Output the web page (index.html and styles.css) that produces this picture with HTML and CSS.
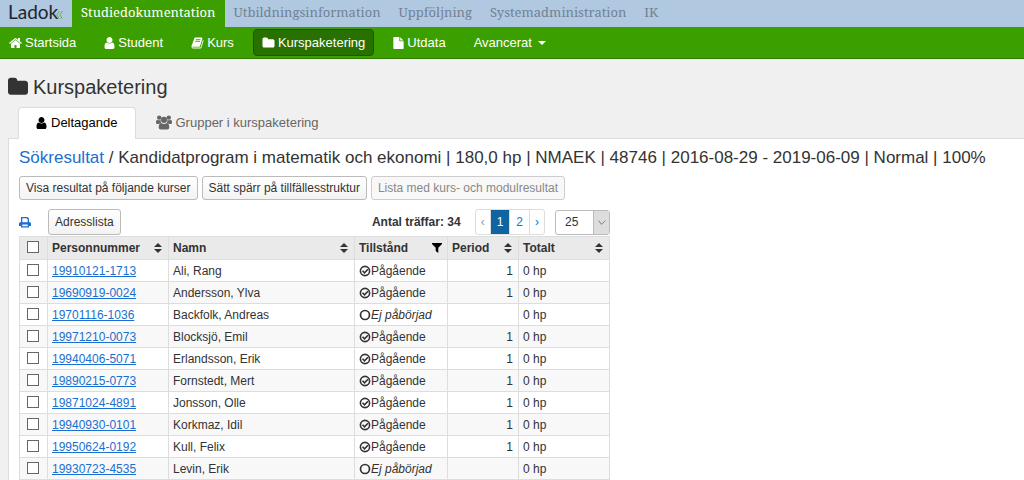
FILE: index.html
```html
<!DOCTYPE html>
<html lang="sv">
<head>
<meta charset="utf-8">
<title>Ladok – Kurspaketering</title>
<link rel="stylesheet" href="styles.css">
</head>
<body>
<svg class="sprite" aria-hidden="true">
  <symbol id="home" viewBox="64 128 1664 1536"><path d="M1472 992v480q0 26-19 45t-45 19h-384v-384h-256v384h-384q-26 0-45-19t-19-45v-480q0-1 .5-3t.5-3l575-474 575 474q1 2 1 6zm223-69l-62 74q-8 9-21 11h-3q-13 0-21-7l-692-577-692 577q-12 8-24 7-13-2-21-11l-62-74q-8-10-7-23.5t11-21.5l719-599q32-26 76-26t76 26l244 204v-195q0-14 9-23t23-9h192q14 0 23 9t9 23v408l219 182q10 8 11 21.5t-7 23.5z"/></symbol>
  <symbol id="user" viewBox="256 128 1280 1536"><path d="M1536 1399q0 109-62.5 187t-150.5 78h-854q-88 0-150.5-78t-62.5-187q0-85 8.5-160.5t31.5-152 58.5-131 94-89 134.5-34.5q131 128 313 128t313-128q76 0 134.5 34.5t94 89 58.5 131 31.5 152 8.500 160.500zm-256-887q0 159-112.500 271.500t-271.500 112.500-271.500-112.500-112.500-271.500 112.500-271.500 271.500-112.500 271.500 112.500 112.500 271.500z"/></symbol>
  <symbol id="folder" viewBox="64 64 1664 1664"><path d="M1728 608v704q0 92-66 158t-158 66h-1216q-92 0-158-66t-66-158v-960q0-92 66-158t158-66h320q92 0 158 66t66 158v32h672q92 0 158 66t66 158z"/></symbol>
  <symbol id="book" viewBox="64 64 1664 1664"><path d="M1703 478q40 57 18 129l-275 906q-19 64-76.5 107.5t-122.5 43.5h-923q-77 0-148.5-53.5t-99.5-131.5q-24-67-2-127 0-4 3-27t4-37q1-8-3-21.5t-3-19.5q2-11 8-21t16.5-23.5 16.5-23.5q23-38 45-91.5t30-91.5q3-10 .5-30t-.5-28q3-11 17-28t17-23q21-36 42-92t25-90q1-9-2.5-32t.5-28q4-13 22-30.5t22-22.5q19-26 42.5-84.5t27.5-96.5q1-8-3-25.5t-2-26.5q2-8 9-18t18-23 17-21q8-12 16.5-30.5t15-35 16-36 19.5-32 26.5-23.5 36-11.5 47.5 5.5l-1 3q38-9 51-9h761q74 0 114 56t18 130l-274 906q-36 119-71.5 153.5t-128.5 34.5h-869q-27 0-38 15-11 16-1 43 24 70 144 70h923q29 0 56-15.5t35-41.5l300-987q7-22 5-57 38 15 59 43zm-1064 2q-4 13 2 22.5t20 9.5h608q13 0 25.5-9.5t16.5-22.5l21-64q4-13-2-22.5t-20-9.5h-608q-13 0-25.5 9.5t-16.5 22.5zm-83 256q-4 13 2 22.5t20 9.5h608q13 0 25.5-9.5t16.5-22.5l21-64q4-13-2-22.5t-20-9.5h-608q-13 0-25.5 9.5t-16.5 22.5z"/></symbol>
  <symbol id="file" viewBox="128 0 1536 1792"><path d="M1152 512v-472q22 14 36 28l408 408q14 14 28 36h-472zm-128 32q0 40 28 68t68 28h544v1056q0 40-28 68t-68 28h-1344q-40 0-68-28t-28-68v-1600q0-40 28-68t68-28h800v544z"/></symbol>
  <symbol id="users" viewBox="0 0 16 15"><circle cx="3.200" cy="2.600" r="2.200"/><circle cx="12.800" cy="2.600" r="2.200"/><path d="M0 8Q0 4.700 1.500 4.700q1.600 1 3.200.300-.300 1.500.600 2.700-1.400.100-2.300 1.400H1.200Q0 9.100 0 8zM16 8Q16 4.700 14.500 4.700q-1.600 1-3.200.300.300 1.500-.600 2.700 1.400.100 2.300 1.400h1.800Q16 9.100 16 8z"/><circle cx="8" cy="4.800" r="3.100"/><path d="M5.300 8Q8 10 10.700 8q2.600.200 2.600 4.300 0 2.200-2.100 2.200H4.800q-2.100 0-2.100-2.200Q2.700 8.200 5.300 8z"/></symbol>
  <symbol id="print" viewBox="0 0 12 12"><path fill-rule="evenodd" d="M2 1h6.500L10 2.500V6q2 0 2 1.500V10h-2v1.500H2V10H0V7.500Q0 6 2 6zm1.300 1.300V6.200h5.400V3.500L7.500 2.300zM3.300 8.500v1.700h5.400V8.500z"/></symbol>
  <symbol id="sort" viewBox="0 0 8 10"><path d="M4 0l4 4H0zM0 6h8l-4 4z"/></symbol>
  <symbol id="filter" viewBox="0 0 10 10"><path d="M0 0h10v1L6.300 4.800V10L3.700 8V4.800L0 1z"/></symbol>
  <symbol id="done" viewBox="0 0 12 12"><g fill="none" stroke="currentColor" stroke-width="1.600"><circle cx="6" cy="6" r="4.600"/><path d="M3.500 5.800l2 2 3.500-3.500"/></g></symbol>
  <symbol id="open" viewBox="0 0 12 12"><circle cx="6" cy="6" r="4.500" fill="none" stroke="currentColor" stroke-width="1.700"/></symbol>
</svg>

<header>
  <nav class="modules" aria-label="Moduler">
    <a class="logo" href="#">Ladok<svg viewBox="0 0 7 8" aria-hidden="true"><path d="M3.500 0L.800 4l2.700 4M6.500 0L3.800 4l2.700 4"/></svg></a>
    <a class="module current" href="#">Studiedokumentation</a>
    <a class="module" href="#">Utbildningsinformation</a>
    <a class="module" href="#">Uppföljning</a>
    <a class="module" href="#">Systemadministration</a>
    <a class="module" href="#">IK</a>
  </nav>
  <nav class="menu" aria-label="Huvudmeny">
    <a href="#"><svg class="icon"><use href="#home"/></svg>Startsida</a>
    <a href="#"><svg class="icon narrow"><use href="#user"/></svg>Student</a>
    <a href="#"><svg class="icon"><use href="#book"/></svg>Kurs</a>
    <a class="current" href="#"><svg class="icon"><use href="#folder"/></svg>Kurspaketering</a>
    <a href="#"><svg class="icon narrow"><use href="#file"/></svg>Utdata</a>
    <a href="#">Avancerat<span class="caret"></span></a>
  </nav>
</header>

<main>
  <h1><svg><use href="#folder"/></svg>Kurspaketering</h1>
  <nav class="tabs" aria-label="Flikar">
    <a class="tab active" href="#"><svg class="icon narrow"><use href="#user"/></svg>Deltagande</a>
    <a class="tab" href="#"><svg class="icon wide"><use href="#users"/></svg>Grupper i kurspaketering</a>
  </nav>
  <section class="panel">
    <h2><a href="#">Sökresultat</a> / Kandidatprogram i matematik och ekonomi | 180,0 hp | NMAEK | 48746 | 2016-08-29 - 2019-06-09 | Normal | 100%</h2>
    <div class="actions">
      <button type="button">Visa resultat på följande kurser</button>
      <button type="button">Sätt spärr på tillfällesstruktur</button>
      <button type="button" disabled>Lista med kurs- och modulresultat</button>
    </div>
    <div class="results">
      <div class="toolbar">
        <a class="print" href="#" aria-label="Skriv ut"><svg><use href="#print"/></svg></a>
        <button type="button">Adresslista</button>
        <strong>Antal träffar: 34</strong>
        <nav class="pages" aria-label="Sidor"><a class="step off" href="#">‹</a><a class="on" href="#">1</a><a href="#">2</a><a class="step" href="#">›</a></nav>
        <div class="size"><select aria-label="Rader per sida"><option>25</option></select><svg viewBox="0 0 16 22" aria-hidden="true"><path d="M5 9l3 4 4-4"/></svg></div>
      </div>
      <table>
        <colgroup><col class="c-check"><col class="c-id"><col class="c-name"><col class="c-state"><col class="c-period"><col class="c-total"></colgroup>
        <thead><tr>
          <th><input type="checkbox" aria-label="Markera alla"></th>
          <th><div>Personnummer<svg class="sort"><use href="#sort"/></svg></div></th>
          <th><div>Namn<svg class="sort"><use href="#sort"/></svg></div></th>
          <th><div>Tillstånd<svg class="filter"><use href="#filter"/></svg></div></th>
          <th><div>Period<svg class="sort"><use href="#sort"/></svg></div></th>
          <th><div>Totalt<svg class="sort"><use href="#sort"/></svg></div></th>
        </tr></thead>
        <tbody>
          <tr><td><input type="checkbox" aria-label="Ali, Rang"></td><td><a href="#">19910121-1713</a></td><td>Ali, Rang</td><td><svg><use href="#done"/></svg>Pågående</td><td>1</td><td>0 hp</td></tr>
          <tr><td><input type="checkbox" aria-label="Andersson, Ylva"></td><td><a href="#">19690919-0024</a></td><td>Andersson, Ylva</td><td><svg><use href="#done"/></svg>Pågående</td><td>1</td><td>0 hp</td></tr>
          <tr><td><input type="checkbox" aria-label="Backfolk, Andreas"></td><td><a href="#">19701116-1036</a></td><td>Backfolk, Andreas</td><td><svg><use href="#open"/></svg><em>Ej påbörjad</em></td><td></td><td>0 hp</td></tr>
          <tr><td><input type="checkbox" aria-label="Blocksjö, Emil"></td><td><a href="#">19971210-0073</a></td><td>Blocksjö, Emil</td><td><svg><use href="#done"/></svg>Pågående</td><td>1</td><td>0 hp</td></tr>
          <tr><td><input type="checkbox" aria-label="Erlandsson, Erik"></td><td><a href="#">19940406-5071</a></td><td>Erlandsson, Erik</td><td><svg><use href="#done"/></svg>Pågående</td><td>1</td><td>0 hp</td></tr>
          <tr><td><input type="checkbox" aria-label="Fornstedt, Mert"></td><td><a href="#">19890215-0773</a></td><td>Fornstedt, Mert</td><td><svg><use href="#done"/></svg>Pågående</td><td>1</td><td>0 hp</td></tr>
          <tr><td><input type="checkbox" aria-label="Jonsson, Olle"></td><td><a href="#">19871024-4891</a></td><td>Jonsson, Olle</td><td><svg><use href="#done"/></svg>Pågående</td><td>1</td><td>0 hp</td></tr>
          <tr><td><input type="checkbox" aria-label="Korkmaz, Idil"></td><td><a href="#">19940930-0101</a></td><td>Korkmaz, Idil</td><td><svg><use href="#done"/></svg>Pågående</td><td>1</td><td>0 hp</td></tr>
          <tr><td><input type="checkbox" aria-label="Kull, Felix"></td><td><a href="#">19950624-0192</a></td><td>Kull, Felix</td><td><svg><use href="#done"/></svg>Pågående</td><td>1</td><td>0 hp</td></tr>
          <tr><td><input type="checkbox" aria-label="Levin, Erik"></td><td><a href="#">19930723-4535</a></td><td>Levin, Erik</td><td><svg><use href="#open"/></svg><em>Ej påbörjad</em></td><td></td><td>0 hp</td></tr>
        </tbody>
      </table>
    </div>
  </section>
</main>
</body>
</html>
```
FILE: styles.css
```css
* { box-sizing: border-box; }
body { margin: 0; background: #f0f0f0; color: #333; font: 12px/16px "Liberation Sans", Arial, sans-serif; }
a { color: #1b6fd0; text-decoration: none; }
svg { fill: currentColor; flex: none; }
.sprite { display: none; }

.modules { display: flex; background: #b0c8e0; height: 27px; }
.logo { display: flex; align-items: baseline; width: 72px; padding-left: 8px; color: #1c2430; font: 19px/24px Lato, sans-serif; }
.logo svg { width: 7px; height: 8px; margin-left: -2px; fill: none; stroke: #6fb043; stroke-width: 1; }
.module { padding: 0 9px; color: #708294; font: 13px/25px "Noto Serif", "Liberation Serif", serif; }
.module.current { background: #3c9f00; color: #fff; }

.menu { display: flex; gap: 10px; align-items: center; background: #3c9f00; border-bottom: 1px solid #2d7a05; height: 32px; }
.menu a { display: flex; align-items: center; gap: 3px; padding: 0 8px; height: 27px; border: 1px solid transparent; border-radius: 4px; color: #fff; font-size: 13px; }
.menu a.current { background: #287000; border-color: #1f5800; }
.icon { width: 13px; height: 12px; }
.icon.narrow { width: 11px; }
.icon.wide { width: 16px; height: 15px; }
.caret { margin-left: 3px; border: 4px solid transparent; border-top-color: #fff; border-bottom: 0; }

main { padding-top: 16px; }
h1 { display: flex; align-items: center; gap: 5px; margin: 0 8px 8px; font-size: 20px; font-weight: 400; line-height: 24px; }
h1 svg { width: 20px; height: 20px; }
.tabs { display: flex; padding-left: 18px; }
.tab { display: flex; align-items: center; gap: 4px; height: 31px; padding: 0 19px 1px; border: 1px solid transparent; border-bottom: 0; color: #666; font-size: 13px; }
.tab.active { background: #fff; border-color: #ddd; border-radius: 4px 4px 0 0; color: #000; margin-bottom: -1px; height: 32px; padding: 0 17px 2px; }

.panel { margin-left: 8px; padding: 8px 0 0 10px; background: #fff; border: 1px solid #ddd; border-right: 0; }
h2 { margin: 0 0 8px; font-size: 17px; font-weight: 400; line-height: 21px; }
.actions { display: flex; gap: 4px; }
button { height: 24px; padding: 0 6px; background: linear-gradient(#fff, #f3f3f3); border: 1px solid #bbb; border-radius: 3px; color: #333; font: inherit; white-space: nowrap; }
button:disabled { background: #f8f8f8; border-color: #ccc; color: #888; }

.results { width: 591px; max-width: 100%; margin-top: 9px; }
.toolbar { display: flex; align-items: center; margin-bottom: 1px; }
.toolbar button { height: 26px; }
.print { width: 29px; height: 12px; }
.print svg { width: 12px; height: 12px; display: block; }
.toolbar strong { margin-left: auto; }
.pages { display: flex; margin: 0 10px 0 14px; border: 1px solid #ddd; border-radius: 3px; }
.pages a { padding: 0 6px; line-height: 24px; border-left: 1px solid #ddd; }
.pages .step { padding: 0 5px; }
.pages a:first-child { border-left: 0; }
.pages .off { color: #999; }
.pages .on { background: #1065a0; color: #fff; }
.size { position: relative; width: 55px; height: 25px; }
.size select { appearance: none; width: 100%; height: 100%; padding: 0 9px; background: #fff; border: 1px solid #bbb; border-radius: 3px; color: #333; font: inherit; }
.size svg { position: absolute; top: 1px; right: 1px; width: 16px; height: 23px; background: #ddd; border-left: 1px solid #bbb; fill: none; stroke: #777; pointer-events: none; }

table { width: 100%; table-layout: fixed; border-collapse: collapse; }
.c-check { width: 28px; }
.c-id { width: 121px; }
.c-name { width: 186px; }
.c-state { width: 93px; }
.c-period { width: 71px; }
th, td { height: 22px; padding: 0 5px 0 4px; border: 1px solid #ddd; text-align: left; line-height: 16px; white-space: nowrap; }
th { height: 23px; background: #eaeaea; }
th div { display: flex; align-items: center; justify-content: space-between; }
th:first-child, td:first-child { padding: 0 1px 2px 0; }
td:nth-child(5) { text-align: right; }
tbody tr:nth-child(even) { background: #f8f8f8; }
td a { text-decoration: underline; }
td svg { width: 12px; height: 12px; vertical-align: -2px; }
.sort { width: 8px; height: 10px; margin-right: 1px; }
.filter { width: 10px; height: 10px; color: #000; }
input[type="checkbox"] { appearance: none; display: block; width: 12px; height: 12px; margin: 0 auto; background: #fff; border: 1px solid #666; }
```
